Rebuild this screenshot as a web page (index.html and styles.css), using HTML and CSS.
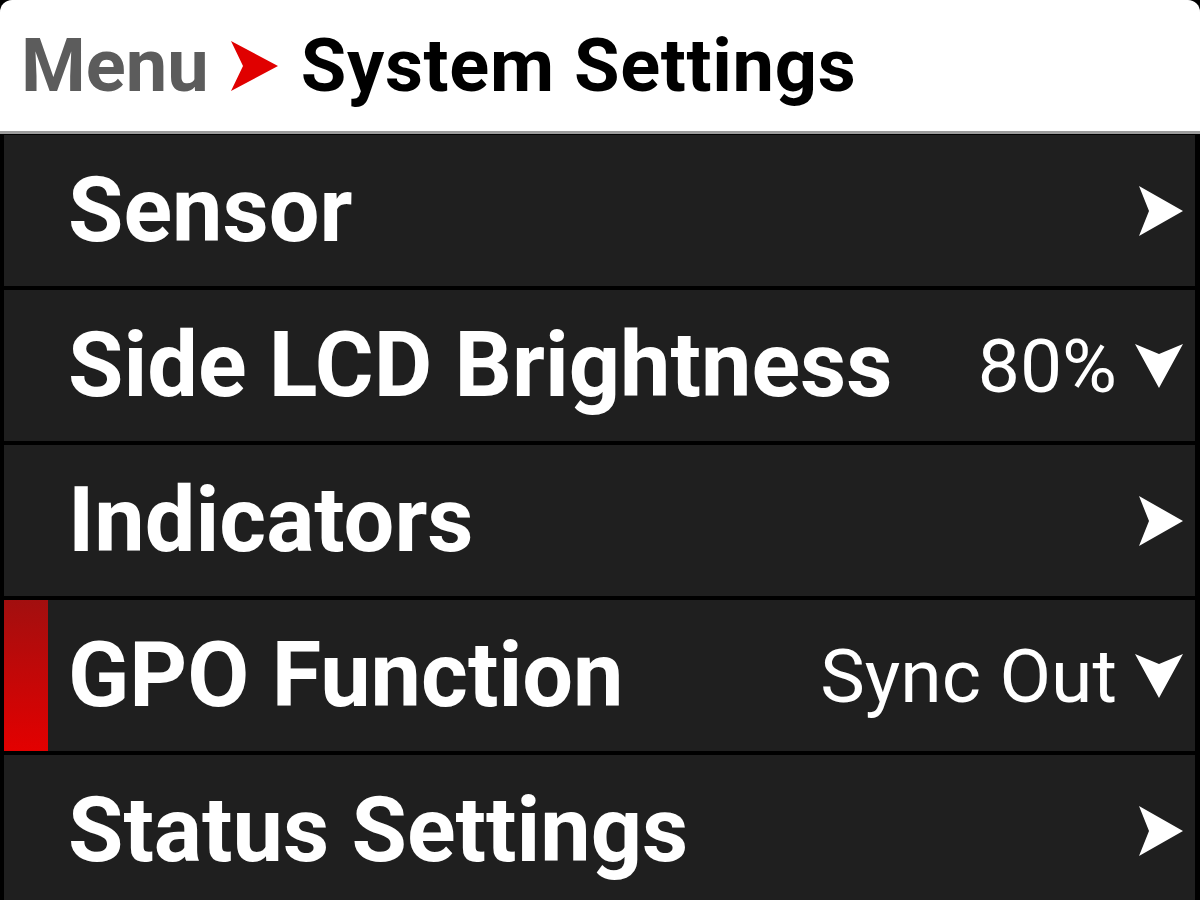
FILE: index.html
```html
<!DOCTYPE html>
<html lang="en">
<head>
    <meta charset="UTF-8">
    <title>System Settings</title>
    <link rel="stylesheet" href="styles.css">
</head>
<body>
    <header class="crumbs">
        <span class="crumb-parent">Menu</span>
        <svg class="crumb-sep" width="48" height="50" viewBox="0 0 48 50">
            <path d="M0 0 L47 25 L0 50 L12 25 Z" fill="#e00000"/>
        </svg>
        <span class="crumb-current">System Settings</span>
    </header>

    <div class="menu">
        <div class="menu-row">
            <span class="label">Sensor</span>
            <div class="right">
                <svg class="icon" width="44" height="50" viewBox="0 0 44 50"><path d="M0 0 L44 25 L0 50 L10 25 Z" fill="#fff"/></svg>
            </div>
        </div>
        <div class="menu-row">
            <span class="label">Side LCD Brightness</span>
            <div class="right">
                <span class="value">80%</span>
                <svg class="icon" width="48" height="44" viewBox="0 0 48 44"><path d="M0 0 L24 10 L48 0 L24 44 Z" fill="#fff"/></svg>
            </div>
        </div>
        <div class="menu-row">
            <span class="label">Indicators</span>
            <div class="right">
                <svg class="icon" width="44" height="50" viewBox="0 0 44 50"><path d="M0 0 L44 25 L0 50 L10 25 Z" fill="#fff"/></svg>
            </div>
        </div>
        <div class="menu-row selected">
            <span class="label">GPO Function</span>
            <div class="right">
                <span class="value">Sync Out</span>
                <svg class="icon" width="48" height="44" viewBox="0 0 48 44"><path d="M0 0 L24 10 L48 0 L24 44 Z" fill="#fff"/></svg>
            </div>
        </div>
        <div class="menu-row">
            <span class="label">Status Settings</span>
            <div class="right">
                <svg class="icon" width="44" height="50" viewBox="0 0 44 50"><path d="M0 0 L44 25 L0 50 L10 25 Z" fill="#fff"/></svg>
            </div>
        </div>
    </div>
</body>
</html>
```

FILE: styles.css
```css
body {
    margin: 0;
    background-color: #000;
    font-family: Roboto, "Liberation Sans", sans-serif;
    overflow: hidden;
}
.crumbs {
    height: 131px;
    background-color: #fff;
    border-radius: 12px 12px 0 0;
    border-bottom: 3px solid #9c9c9c;
    display: flex;
    align-items: center;
    gap: 22px;
    padding-left: 21px;
    font-size: 74px;
    font-weight: 700;
}
.crumb-parent {
    color: #5c5c5c;
}
.crumb-current {
    color: #000;
    letter-spacing: 0.7px;
}
.menu {
    display: flex;
    flex-direction: column;
    gap: 4px;
    padding: 1px 5px 0 4px;
}
.menu-row {
    position: relative;
    height: 151px;
    flex-shrink: 0;
    background-color: #1f1f1f;
    display: flex;
    align-items: center;
    padding: 0 12px 0 64px;
    color: #fff;
}
.menu-row.selected::before {
    content: "";
    position: absolute;
    left: 0;
    top: 0;
    bottom: 0;
    width: 44px;
    background: linear-gradient(#a20f0f, #e30000);
}
.label {
    font-size: 90px;
    font-weight: 700;
}
.right {
    margin-left: auto;
    display: flex;
    align-items: center;
    gap: 18px;
}
.value {
    font-size: 75px;
    font-weight: 400;
}
.icon {
    display: block;
}
```
